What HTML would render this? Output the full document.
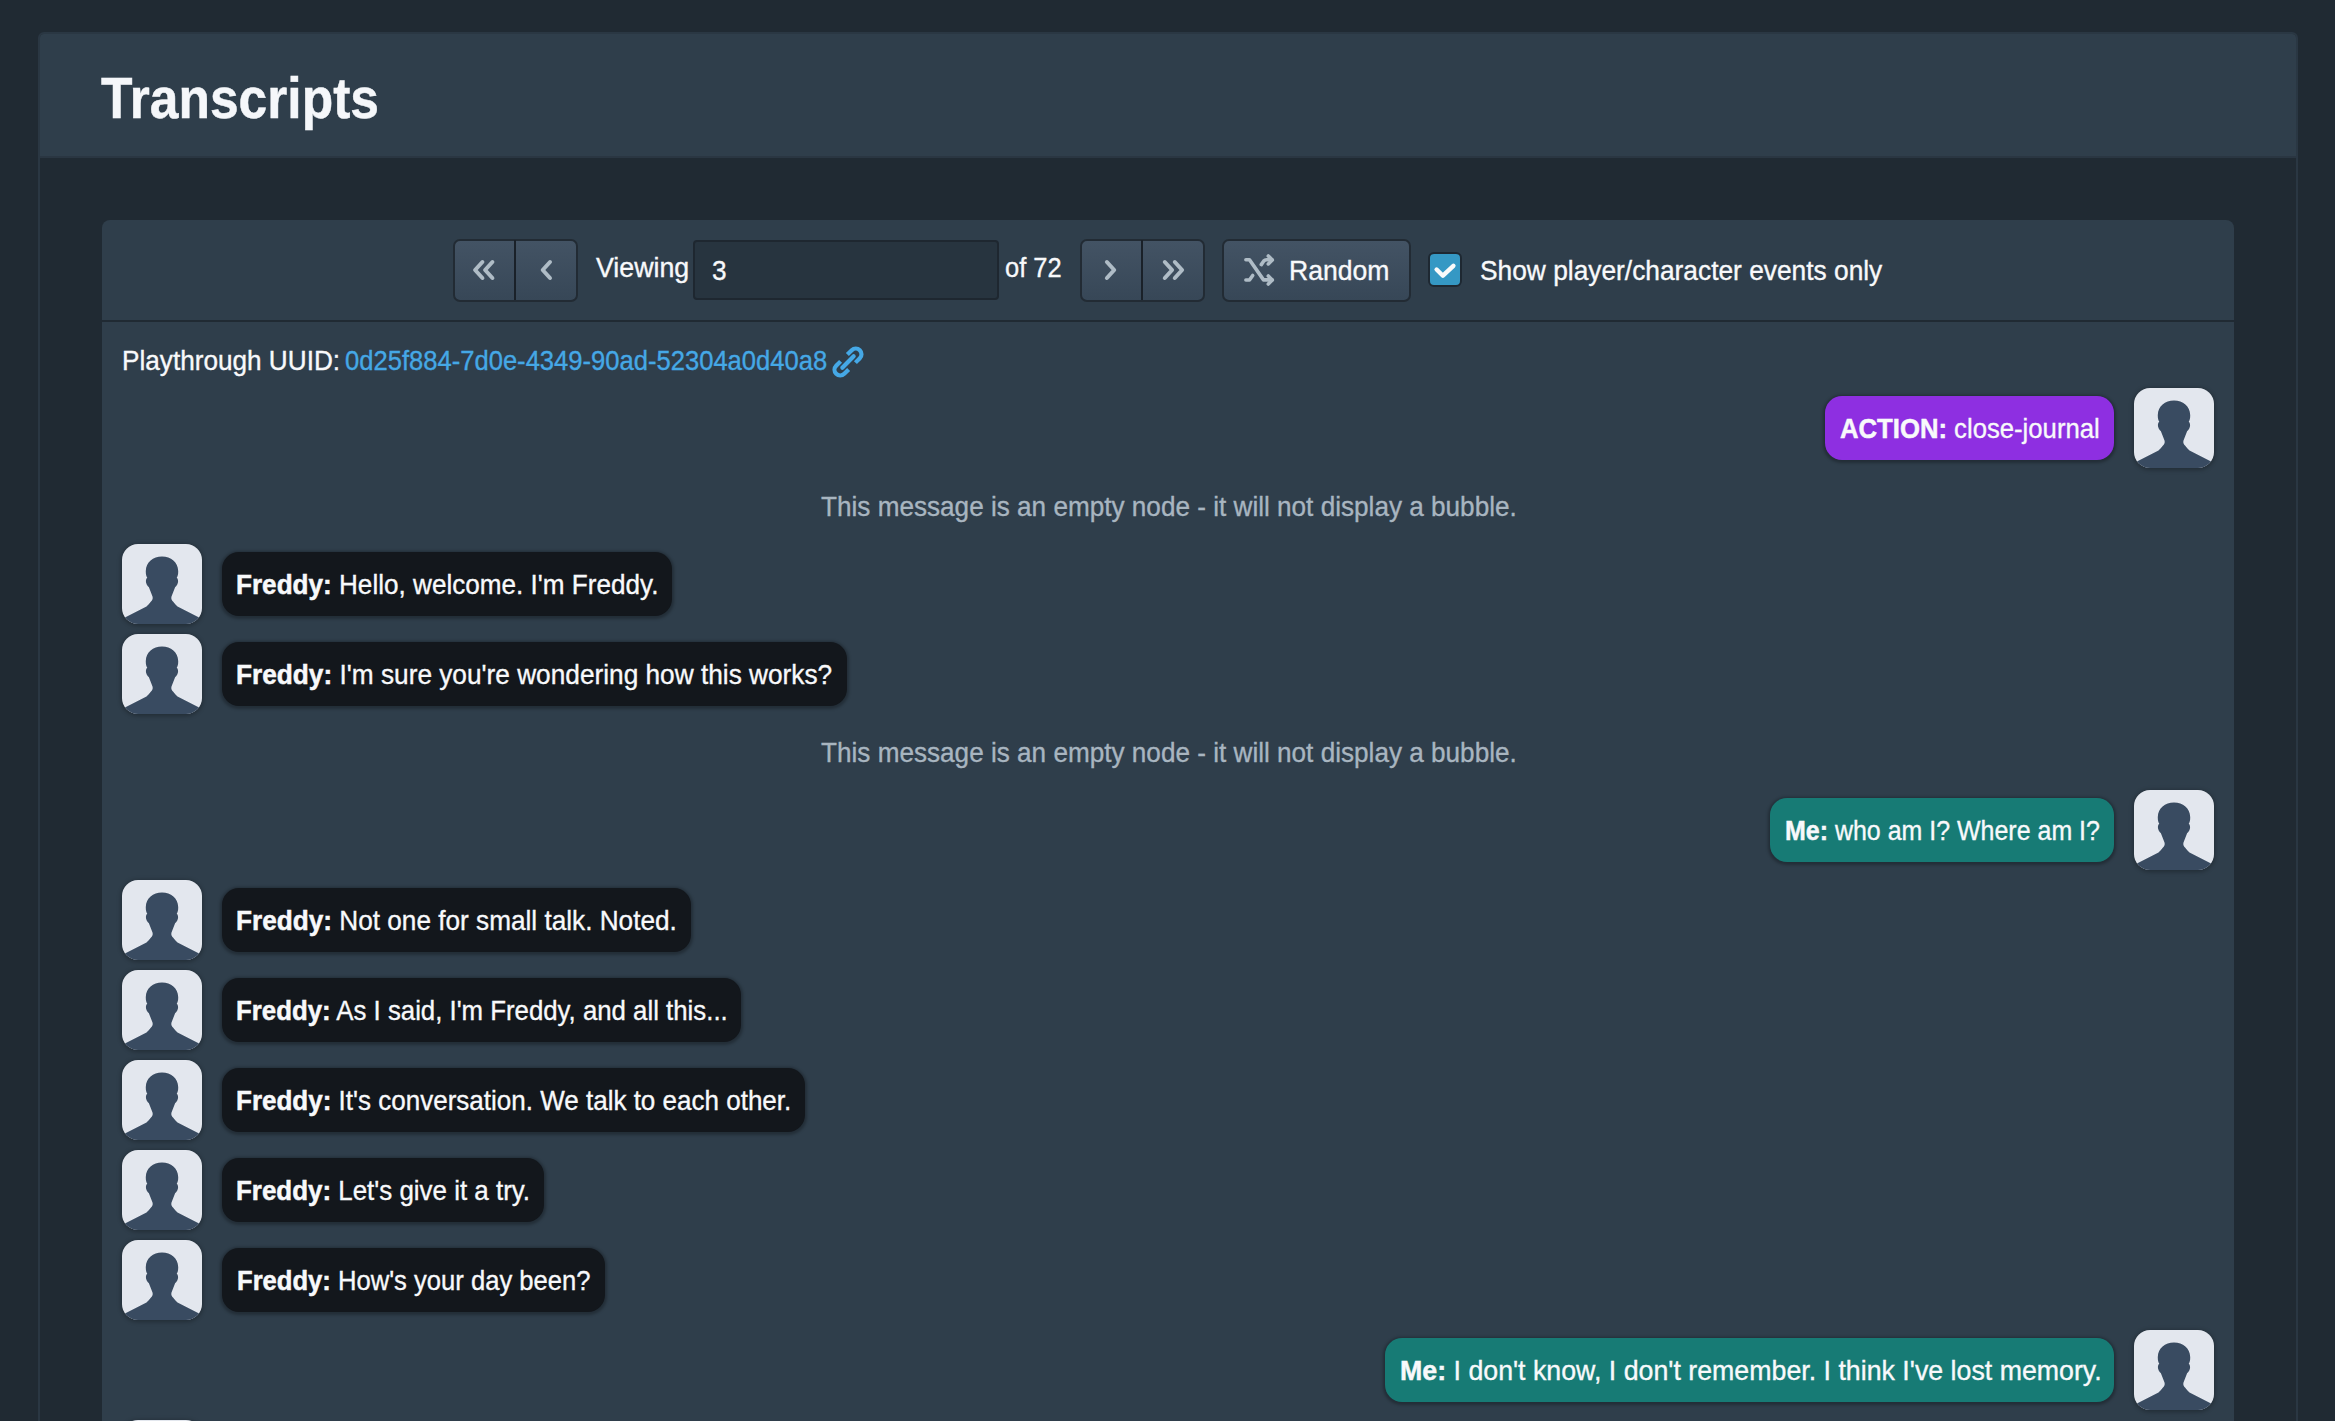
<!DOCTYPE html>
<html><head><meta charset="utf-8"><style>
html,body{margin:0;padding:0}
body{width:2335px;height:1421px;overflow:hidden;background:#202a33;position:relative;font-family:"Liberation Sans", sans-serif}
.abs{position:absolute}
.outer{position:absolute;left:38px;top:32px;width:2256px;height:1500px;border:2px solid #2a3743;border-radius:6px;background:#202a33}
.hdr{position:absolute;left:40px;top:34px;width:2256px;height:122px;background:#2f3e4b;border-bottom:2px solid #2a3642;border-radius:4px 4px 0 0}
.card{position:absolute;left:102px;top:220px;width:2132px;height:1400px;background:#2f3e4b;border-radius:8px}
.sep{position:absolute;left:102px;top:320px;width:2132px;height:2px;background:#202a33}
.btn{position:absolute;box-sizing:border-box;border:2px solid #222b34;border-radius:7px;background:linear-gradient(#435364,#374757)}
.div{position:absolute;width:2px;background:#1a2129}
.inp{position:absolute;box-sizing:border-box;border:2px solid #1e2730;border-radius:4px;background:#27343f}
.chk{position:absolute;box-sizing:border-box;border:2px solid #1e2832;border-radius:6px;background:#3598c4}
.av{position:absolute;width:80px;height:80px;border-radius:16px;background:#e3e7ee;overflow:hidden;box-shadow:0 1px 4px 1px rgba(0,0,0,.28)}
.av svg{display:block}
.bb{position:absolute;height:64px;border-radius:17px;box-shadow:0 1px 3px 1.5px rgba(0,0,0,.27)}
.t{position:absolute;white-space:nowrap;line-height:1;-webkit-text-stroke:0.35px currentColor}
.t span{display:inline-block;transform-origin:0 0}
.t b{font-weight:bold;-webkit-text-stroke:0.5px currentColor}
</style></head><body>
<div class="outer"></div>
<div class="hdr"></div>
<div class="card"></div>
<div class="sep"></div>
<div class="btn" style="left:452.5px;top:238.5px;width:125px;height:63px"></div>
<div class="div" style="left:514px;top:240px;height:60px"></div>
<div class="inp" style="left:693px;top:240px;width:306px;height:60px"></div>
<div class="btn" style="left:1080px;top:238.5px;width:125px;height:63px"></div>
<div class="div" style="left:1141px;top:240px;height:60px"></div>
<div class="btn" style="left:1221.5px;top:238.5px;width:189px;height:63px"></div>
<div class="chk" style="left:1428px;top:252px;width:34px;height:35px"></div>
<div class="av" style="left:2134px;top:388px"><svg width="80" height="80" viewBox="0 0 80 80"><path fill="#394b61" d="M40 12.6C31 12.6 24 18.500 23.800 27C23.700 30 24.300 32.500 25.300 33.600C24 35 23.600 37 24.200 39C24.800 41 25.800 42.500 26.800 43L30.500 52.500C31 54.500 30.500 56 29 57.500C27.500 59.500 26 61 24.500 62.500L-2 76V82H82V76L55.500 62.500C54 61 52.500 59.500 51 57.500C49.500 56 49 54.500 49.500 52.500L53.200 43C54.200 42.500 55.200 41 55.800 39C56.400 37 56 35 54.700 33.600C55.700 32.500 56.300 30 56.200 27C56 18.500 49 12.600 40 12.600Z"/></svg></div><div class="bb" style="left:1825px;top:396px;width:289px;background:#8e2fe1"></div><div class="av" style="left:122px;top:544px"><svg width="80" height="80" viewBox="0 0 80 80"><path fill="#394b61" d="M40 12.6C31 12.6 24 18.500 23.800 27C23.700 30 24.300 32.500 25.300 33.600C24 35 23.600 37 24.200 39C24.800 41 25.800 42.500 26.800 43L30.500 52.500C31 54.500 30.500 56 29 57.500C27.500 59.500 26 61 24.500 62.500L-2 76V82H82V76L55.500 62.500C54 61 52.500 59.500 51 57.500C49.500 56 49 54.500 49.500 52.500L53.200 43C54.200 42.500 55.200 41 55.800 39C56.400 37 56 35 54.700 33.600C55.700 32.500 56.300 30 56.200 27C56 18.500 49 12.600 40 12.600Z"/></svg></div><div class="bb" style="left:222px;top:552px;width:450px;background:#13171c"></div><div class="av" style="left:122px;top:634px"><svg width="80" height="80" viewBox="0 0 80 80"><path fill="#394b61" d="M40 12.6C31 12.6 24 18.500 23.800 27C23.700 30 24.300 32.500 25.300 33.600C24 35 23.600 37 24.200 39C24.800 41 25.800 42.500 26.800 43L30.500 52.500C31 54.500 30.500 56 29 57.500C27.500 59.500 26 61 24.500 62.500L-2 76V82H82V76L55.500 62.500C54 61 52.500 59.500 51 57.500C49.500 56 49 54.500 49.500 52.500L53.200 43C54.200 42.500 55.200 41 55.800 39C56.400 37 56 35 54.700 33.600C55.700 32.500 56.300 30 56.200 27C56 18.500 49 12.600 40 12.600Z"/></svg></div><div class="bb" style="left:222px;top:642px;width:625px;background:#13171c"></div><div class="av" style="left:2134px;top:790px"><svg width="80" height="80" viewBox="0 0 80 80"><path fill="#394b61" d="M40 12.6C31 12.6 24 18.500 23.800 27C23.700 30 24.300 32.500 25.300 33.600C24 35 23.600 37 24.200 39C24.800 41 25.800 42.500 26.800 43L30.500 52.500C31 54.500 30.500 56 29 57.500C27.500 59.500 26 61 24.500 62.500L-2 76V82H82V76L55.500 62.500C54 61 52.500 59.500 51 57.500C49.500 56 49 54.500 49.500 52.500L53.200 43C54.200 42.500 55.200 41 55.800 39C56.400 37 56 35 54.700 33.600C55.700 32.500 56.300 30 56.200 27C56 18.500 49 12.600 40 12.600Z"/></svg></div><div class="bb" style="left:1770px;top:798px;width:344px;background:#177b75"></div><div class="av" style="left:122px;top:880px"><svg width="80" height="80" viewBox="0 0 80 80"><path fill="#394b61" d="M40 12.6C31 12.6 24 18.500 23.800 27C23.700 30 24.300 32.500 25.300 33.600C24 35 23.600 37 24.200 39C24.800 41 25.800 42.500 26.800 43L30.500 52.500C31 54.500 30.500 56 29 57.500C27.500 59.500 26 61 24.500 62.500L-2 76V82H82V76L55.500 62.500C54 61 52.500 59.500 51 57.500C49.500 56 49 54.500 49.500 52.500L53.200 43C54.200 42.500 55.200 41 55.800 39C56.400 37 56 35 54.700 33.600C55.700 32.500 56.300 30 56.200 27C56 18.500 49 12.600 40 12.600Z"/></svg></div><div class="bb" style="left:222px;top:888px;width:468.5px;background:#13171c"></div><div class="av" style="left:122px;top:970px"><svg width="80" height="80" viewBox="0 0 80 80"><path fill="#394b61" d="M40 12.6C31 12.6 24 18.500 23.800 27C23.700 30 24.300 32.500 25.300 33.600C24 35 23.600 37 24.200 39C24.800 41 25.800 42.500 26.800 43L30.500 52.500C31 54.500 30.500 56 29 57.500C27.500 59.500 26 61 24.500 62.500L-2 76V82H82V76L55.500 62.500C54 61 52.500 59.500 51 57.500C49.500 56 49 54.500 49.500 52.500L53.200 43C54.200 42.500 55.200 41 55.800 39C56.400 37 56 35 54.700 33.600C55.700 32.500 56.300 30 56.200 27C56 18.500 49 12.600 40 12.600Z"/></svg></div><div class="bb" style="left:222px;top:978px;width:519px;background:#13171c"></div><div class="av" style="left:122px;top:1060px"><svg width="80" height="80" viewBox="0 0 80 80"><path fill="#394b61" d="M40 12.6C31 12.6 24 18.500 23.800 27C23.700 30 24.300 32.500 25.300 33.600C24 35 23.600 37 24.200 39C24.800 41 25.800 42.500 26.800 43L30.500 52.500C31 54.500 30.500 56 29 57.500C27.500 59.500 26 61 24.500 62.500L-2 76V82H82V76L55.500 62.500C54 61 52.500 59.500 51 57.500C49.500 56 49 54.500 49.500 52.500L53.200 43C54.200 42.500 55.200 41 55.800 39C56.400 37 56 35 54.700 33.600C55.700 32.500 56.300 30 56.200 27C56 18.500 49 12.600 40 12.600Z"/></svg></div><div class="bb" style="left:222px;top:1068px;width:582.5px;background:#13171c"></div><div class="av" style="left:122px;top:1150px"><svg width="80" height="80" viewBox="0 0 80 80"><path fill="#394b61" d="M40 12.6C31 12.6 24 18.500 23.800 27C23.700 30 24.300 32.500 25.300 33.600C24 35 23.600 37 24.200 39C24.800 41 25.800 42.500 26.800 43L30.500 52.500C31 54.500 30.500 56 29 57.500C27.500 59.500 26 61 24.500 62.500L-2 76V82H82V76L55.500 62.500C54 61 52.500 59.500 51 57.500C49.500 56 49 54.500 49.500 52.500L53.200 43C54.200 42.500 55.200 41 55.800 39C56.400 37 56 35 54.700 33.600C55.700 32.500 56.300 30 56.200 27C56 18.500 49 12.600 40 12.600Z"/></svg></div><div class="bb" style="left:222px;top:1158px;width:321.5px;background:#13171c"></div><div class="av" style="left:122px;top:1240px"><svg width="80" height="80" viewBox="0 0 80 80"><path fill="#394b61" d="M40 12.6C31 12.6 24 18.500 23.800 27C23.700 30 24.300 32.500 25.300 33.600C24 35 23.600 37 24.200 39C24.800 41 25.800 42.500 26.800 43L30.500 52.500C31 54.500 30.500 56 29 57.500C27.500 59.500 26 61 24.500 62.500L-2 76V82H82V76L55.500 62.500C54 61 52.500 59.500 51 57.500C49.500 56 49 54.500 49.500 52.500L53.200 43C54.200 42.500 55.200 41 55.800 39C56.400 37 56 35 54.700 33.600C55.700 32.500 56.300 30 56.200 27C56 18.500 49 12.600 40 12.600Z"/></svg></div><div class="bb" style="left:222px;top:1248px;width:382.5px;background:#13171c"></div><div class="av" style="left:2134px;top:1330px"><svg width="80" height="80" viewBox="0 0 80 80"><path fill="#394b61" d="M40 12.6C31 12.6 24 18.500 23.800 27C23.700 30 24.300 32.500 25.300 33.600C24 35 23.600 37 24.200 39C24.800 41 25.800 42.500 26.800 43L30.500 52.500C31 54.500 30.500 56 29 57.500C27.500 59.500 26 61 24.500 62.500L-2 76V82H82V76L55.500 62.500C54 61 52.500 59.500 51 57.500C49.500 56 49 54.500 49.500 52.500L53.200 43C54.200 42.500 55.200 41 55.800 39C56.400 37 56 35 54.700 33.600C55.700 32.500 56.300 30 56.200 27C56 18.500 49 12.600 40 12.600Z"/></svg></div><div class="bb" style="left:1385.3px;top:1338px;width:728.7px;background:#177b75"></div><div class="av" style="left:122px;top:1420px"><svg width="80" height="80" viewBox="0 0 80 80"><path fill="#394b61" d="M40 12.6C31 12.6 24 18.500 23.800 27C23.700 30 24.300 32.500 25.300 33.600C24 35 23.600 37 24.200 39C24.800 41 25.800 42.500 26.800 43L30.500 52.500C31 54.500 30.500 56 29 57.500C27.500 59.500 26 61 24.500 62.500L-2 76V82H82V76L55.500 62.500C54 61 52.500 59.500 51 57.500C49.500 56 49 54.500 49.500 52.500L53.200 43C54.200 42.500 55.200 41 55.800 39C56.400 37 56 35 54.700 33.600C55.700 32.500 56.300 30 56.200 27C56 18.500 49 12.600 40 12.600Z"/></svg></div>
<svg class="ic" width="2335" height="400" viewBox="0 0 2335 400" style="position:absolute;left:0;top:0">
<g fill="none" stroke="#afbcc6" stroke-width="4" stroke-linecap="round" stroke-linejoin="round">
<polyline points="482.40000000000003,262 475.1,270 482.40000000000003,278" /><polyline points="492.40000000000003,262 485.1,270 492.40000000000003,278" /><polyline points="550.0,262 542.7,270 550.0,278" />
<polyline points="1106.9,262 1114.2,270 1106.9,278" /><polyline points="1164.8,262 1172.1,270 1164.8,278" /><polyline points="1174.8,262 1182.1,270 1174.8,278" />
</g>
<g fill="none" stroke="#afbcc6" stroke-width="3.6" stroke-linecap="round" stroke-linejoin="round">
<path d="M1245.9 259.8H1249.5L1263.5 279.9H1272"/>
<polyline points="1268.3,276 1272.3,280 1268.3,284"/>
<path d="M1261.3 264.6L1263.8 261Q1264.8 259.8 1266.5 259.8H1272"/>
<polyline points="1268.3,255.9 1272.3,259.9 1268.3,263.9"/>
<path d="M1245.9 280H1249.5L1252.7 275.5"/>
</g>
<polyline points="1436.6,269.5 1442.9,275.7 1453.4,265.8" fill="none" stroke="#fafafa" stroke-width="4.4" stroke-linecap="round" stroke-linejoin="round"/>
<g transform="translate(848,362) rotate(-45)" fill="none" stroke="#45a8e6" stroke-width="4.2">
<path d="M4.8 -5.7H11A5.7 5.7 0 0 1 11 5.7H4.8"/>
<path d="M-4.8 -5.7H-11A5.7 5.7 0 0 0 -11 5.7H-4.8"/>
<path d="M-8 0H8" stroke-linecap="round"/>
</g>
</svg>
<div class="t" id="title" style="left:101.00px;top:68.70px;font-size:58px;color:#f5f7fa"><span style="transform:scaleX(0.8891)"><b>Transcripts</b></span></div>
<div class="t" id="viewing" style="left:595.50px;top:253.62px;font-size:27.5px;color:#f8f9fb"><span style="transform:scaleX(0.9734)">Viewing</span></div>
<div class="t" id="three" style="left:712.06px;top:256.60px;font-size:28px;color:#f8f9fb"><span style="transform:scaleX(0.9357)">3</span></div>
<div class="t" id="of72" style="left:1004.87px;top:253.82px;font-size:27.5px;color:#f8f9fb"><span style="transform:scaleX(0.9271)">of 72</span></div>
<div class="t" id="random" style="left:1288.87px;top:256.82px;font-size:27.5px;color:#f8f9fb"><span style="transform:scaleX(0.9660)">Random</span></div>
<div class="t" id="show" style="left:1480.34px;top:257.43px;font-size:27.5px;color:#f8f9fb"><span style="transform:scaleX(0.9570)">Show player/character events only</span></div>
<div class="t" id="play" style="left:122.10px;top:346.82px;font-size:27.5px;color:#f8f9fb"><span style="transform:scaleX(0.9511)">Playthrough UUID:</span></div>
<div class="t" id="uuid" style="left:344.67px;top:346.82px;font-size:27.5px;color:#45a8e6"><span style="transform:scaleX(0.9302)">0d25f884-7d0e-4349-90ad-52304a0d40a8</span></div>
<div class="t" id="empty1" style="left:821.00px;top:493.33px;font-size:27.5px;color:#a8b5c0"><span style="transform:scaleX(0.9503)">This message is an empty node - it will not display a bubble.</span></div>
<div class="t" id="empty2" style="left:821.00px;top:739.33px;font-size:27.5px;color:#a8b5c0"><span style="transform:scaleX(0.9503)">This message is an empty node - it will not display a bubble.</span></div>
<div class="t" id="r1" style="left:1840.40px;top:414.27px;font-size:28.5px;color:#f8f9fb"><span style="transform:scaleX(0.9010)"><b>ACTION:</b> close-journal</span></div>
<div class="t" id="r2" style="left:236.47px;top:570.27px;font-size:28.5px;color:#f8f9fb"><span style="transform:scaleX(0.9162)"><b>Freddy:</b> Hello, welcome. I'm Freddy.</span></div>
<div class="t" id="r3" style="left:236.46px;top:660.27px;font-size:28.5px;color:#f8f9fb"><span style="transform:scaleX(0.9205)"><b>Freddy:</b> I'm sure you're wondering how this works?</span></div>
<div class="t" id="r4" style="left:1784.55px;top:816.27px;font-size:28.5px;color:#f8f9fb"><span style="transform:scaleX(0.8759)"><b>Me:</b> who am I? Where am I?</span></div>
<div class="t" id="r5" style="left:236.46px;top:906.27px;font-size:28.5px;color:#f8f9fb"><span style="transform:scaleX(0.9185)"><b>Freddy:</b> Not one for small talk. Noted.</span></div>
<div class="t" id="r6" style="left:236.49px;top:996.27px;font-size:28.5px;color:#f8f9fb"><span style="transform:scaleX(0.9048)"><b>Freddy:</b> As I said, I'm Freddy, and all this...</span></div>
<div class="t" id="r7" style="left:236.47px;top:1086.28px;font-size:28.5px;color:#f8f9fb"><span style="transform:scaleX(0.9126)"><b>Freddy:</b> It's conversation. We talk to each other.</span></div>
<div class="t" id="r8" style="left:236.48px;top:1176.28px;font-size:28.5px;color:#f8f9fb"><span style="transform:scaleX(0.9097)"><b>Freddy:</b> Let's give it a try.</span></div>
<div class="t" id="r9" style="left:236.50px;top:1266.28px;font-size:28.5px;color:#f8f9fb"><span style="transform:scaleX(0.8982)"><b>Freddy:</b> How's your day been?</span></div>
<div class="t" id="r10" style="left:1399.72px;top:1356.28px;font-size:28.5px;color:#f8f9fb"><span style="transform:scaleX(0.9386)"><b>Me:</b> I don't know, I don't remember. I think I've lost memory.</span></div>
</body></html>
